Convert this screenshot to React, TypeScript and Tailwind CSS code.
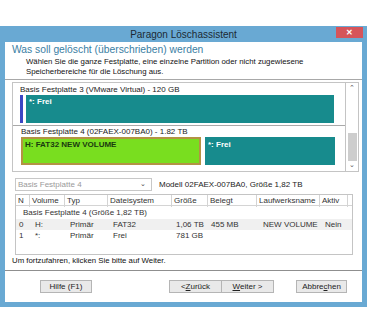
import React from 'react';

const cols = 'grid grid-cols-[14px_35px_43px_64px_36px_49px_63px_28px_1fr]';

const HeaderCell: React.FC<{ label?: string; last?: boolean }> = ({ label, last }) => (
  <div className={`h-full pl-[2px] flex items-center ${last ? '' : 'border-r border-[#d4d4d4]'}`}>{label}</div>
);

const rows = [
  ['0', 'H:', 'Primär', 'FAT32', '1,06 TB', '455 MB', 'NEW VOLUME', 'Nein'],
  ['1', '*:', 'Primär', 'Frei', '781 GB', '', '', ''],
];

const Button: React.FC<{ children: React.ReactNode; className?: string }> = ({ children, className = '' }) => (
  <div
    className={`h-[13px] flex items-center justify-center bg-[#e9e9e9] border border-[#b5b5b5] text-[8px] text-[#222] ${className}`}
  >
    {children}
  </div>
);

export default function App() {
  return (
    <div className="w-[370px] h-[333px] bg-white overflow-hidden" style={{ fontFamily: '"Liberation Sans", Arial, sans-serif' }}>
      <div className="mt-[26px] w-[367px] h-[281px] bg-[#69a9d3] px-[5px] pb-[5px] flex flex-col">
        {/* title bar */}
        <div className="relative h-[16px] shrink-0 flex items-center justify-center text-[10px] text-[#1c2a33]">
          Paragon Löschassistent
          <div className="absolute top-[1px] right-[-1px] w-[27px] h-[11px] bg-[#d6545a] flex items-center justify-center text-white text-[8px] font-bold">
            ✕
          </div>
        </div>

        <div className="flex-1 bg-white flex flex-col">
          {/* header */}
          <div className="h-[38px] shrink-0 border-b border-[#a8a8a8] pl-[7px]">
            <div className="text-[10.3px] leading-[13px] text-[#3a7ea3] pt-[1px]">Was soll gelöscht (überschrieben) werden</div>
            <div className="pl-[14px] text-[7.8px] leading-[10px] text-[#111] pt-[1px]">
              Wählen Sie die ganze Festplatte, eine einzelne Partition oder nicht zugewiesene
              <br />
              Speicherbereiche für die Löschung aus.
            </div>
          </div>

          {/* disk map */}
          <div className="ml-[7px] mt-[2px] w-[347px] h-[90px] border border-[#c4c4c4] flex">
            <div className="flex-1 border-r border-[#c4c4c4] flex flex-col text-[8px] text-[#222]">
              <div className="h-[43px] border-b border-[#a9a9a9] px-[7px] pt-[2px]">
                <div className="leading-[9px]">Basis Festplatte 3 (VMware Virtual) - 120 GB</div>
                <div className="flex mt-[1px] gap-[3px] h-[28px]">
                  <div className="w-[3px] bg-[#3c46c4]" />
                  <div className="w-[308px] bg-[#178b8d] text-white font-bold pl-[3px] pt-[2px] leading-[9px]">*: Frei</div>
                </div>
              </div>
              <div className="px-[8px] pt-[1px]">
                <div className="leading-[9px]">Basis Festplatte 4 (02FAEX-007BA0) - 1.82 TB</div>
                <div className="flex mt-[1px] gap-[4px] h-[28px]">
                  <div className="w-[180px] bg-[#79de1f] border-2 border-[#b39244] text-[#1a3a10] font-bold pl-[2px] pt-[1px] leading-[9px]">
                    H: FAT32 NEW VOLUME
                  </div>
                  <div className="w-[130px] bg-[#178b8d] text-white font-bold pl-[3px] pt-[3px] leading-[9px]">*: Frei</div>
                </div>
              </div>
            </div>
            <div className="w-[12px] flex flex-col items-center text-[7px] text-[#555]">
              <div className="h-[10px] leading-[10px]">⌃</div>
              <div className="flex-1" />
              <div className="w-[9px] h-[28px] bg-[#cdcdcd]" />
              <div className="h-[10px] leading-[8px]">⌄</div>
            </div>
          </div>

          {/* selector */}
          <div className="ml-[10px] mt-[6px] flex items-center gap-[7px] text-[8px]">
            <div className="w-[137px] h-[13px] border border-[#c8c8c8] flex items-center justify-between px-[2px] text-[#9a9a9a]">
              <span>Basis Festplatte 4</span>
              <span className="text-[#444] text-[7px] pr-[3px]">⌄</span>
            </div>
            <span className="text-[#222]">Modell 02FAEX-007BA0, Größe 1,82 TB</span>
          </div>

          {/* table */}
          <div className="ml-[10px] mt-[3px] w-[338px] h-[61px] border border-[#c4c4c4] text-[8px] text-[#333]">
            <div className={`${cols} h-[11px] border-b border-[#d4d4d4]`}>
              <HeaderCell label="N" />
              <HeaderCell label="Volume" />
              <HeaderCell label="Typ" />
              <HeaderCell label="Dateisystem" />
              <HeaderCell label="Größe" />
              <HeaderCell label="Belegt" />
              <HeaderCell label="Laufwerksname" />
              <HeaderCell label="Aktiv" />
              <HeaderCell last />
            </div>
            <div className="h-[13px] pl-[7px] flex items-center">Basis Festplatte 4 (Größe 1,82 TB)</div>
            {rows.map((r, i) => (
              <div key={i} className={`${cols} h-[11px] items-center ${i === 0 ? 'bg-[#f0f0f0]' : ''}`}>
                <div className="pl-[3px]">{r[0]}</div>
                <div className="pl-[5px]">{r[1]}</div>
                <div className="pl-[5px]">{r[2]}</div>
                <div className="pl-[5px]">{r[3]}</div>
                <div className="pl-[4px]">{r[4]}</div>
                <div className="pl-[3px]">{r[5]}</div>
                <div className="pl-[6px]">{r[6]}</div>
                <div className="pl-[5px]">{r[7]}</div>
                <div />
              </div>
            ))}
          </div>

          <div className="pl-[7px] mt-[1px] text-[7.8px] leading-[10px] text-[#111]">Um fortzufahren, klicken Sie bitte auf Weiter.</div>

          {/* buttons */}
          <div className="mt-[4px] border-t border-[#8f8f8f] flex-1 flex items-start pt-[9px] pl-[35px]">
            <Button className="w-[52px]">Hilfe (F1)</Button>
            <div className="ml-[77px] flex">
              <Button className="w-[53px]">
                &lt;<span className="underline">Z</span>urück
              </Button>
              <Button className="w-[52px] border-l-0">
                <span className="underline">W</span>eiter &gt;
              </Button>
            </div>
            <Button className="ml-[22px] w-[51px]">
              Abbre<span className="underline">c</span>hen
            </Button>
          </div>
        </div>
      </div>
    </div>
  );
}
